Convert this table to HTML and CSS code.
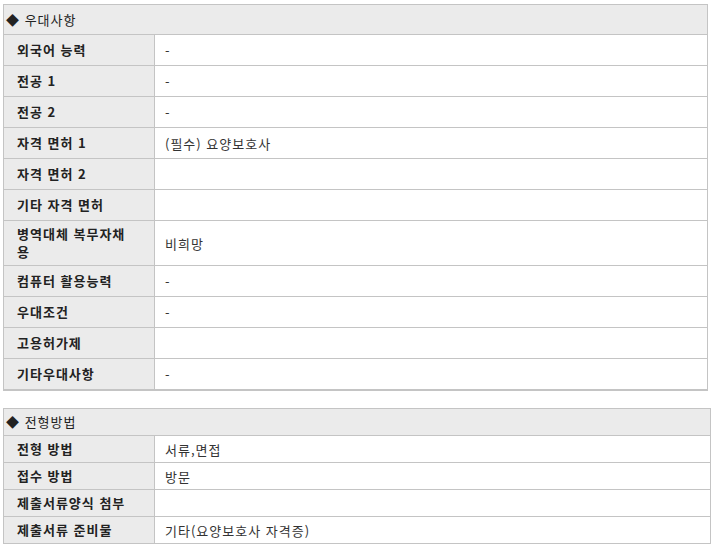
FILE: index.html
```html
<!DOCTYPE html>
<html lang="ko">
<head>
<meta charset="utf-8">
<link rel="stylesheet" href="styles.css">
</head>
<body>
<div class="page">
  <section class="box box-first">
    <div class="head">◆ 우대사항</div>
    <div class="row"><div class="label">외국어 능력</div><div class="value">-</div></div>
    <div class="row"><div class="label">전공 1</div><div class="value">-</div></div>
    <div class="row"><div class="label">전공 2</div><div class="value">-</div></div>
    <div class="row"><div class="label">자격 면허 1</div><div class="value">(필수) 요양보호사</div></div>
    <div class="row"><div class="label">자격 면허 2</div><div class="value"></div></div>
    <div class="row"><div class="label">기타 자격 면허</div><div class="value"></div></div>
    <div class="row"><div class="label wrap">병역대체 복무자채용</div><div class="value">비희망</div></div>
    <div class="row"><div class="label">컴퓨터 활용능력</div><div class="value">-</div></div>
    <div class="row"><div class="label">우대조건</div><div class="value">-</div></div>
    <div class="row"><div class="label">고용허가제</div><div class="value"></div></div>
    <div class="row last"><div class="label">기타우대사항</div><div class="value">-</div></div>
  </section>
  <section class="box box-second">
    <div class="head">◆ 전형방법</div>
    <div class="row"><div class="label">전형 방법</div><div class="value">서류,면접</div></div>
    <div class="row"><div class="label">접수 방법</div><div class="value">방문</div></div>
    <div class="row"><div class="label">제출서류양식 첨부</div><div class="value"></div></div>
    <div class="row last"><div class="label">제출서류 준비물</div><div class="value">기타(요양보호사 자격증)</div></div>
  </section>
</div>
</body>
</html>
```
FILE: styles.css
```css
html, body {
  margin: 0;
  padding: 0;
  background: #fff;
}
body {
  font-family: "Noto Sans CJK KR", "Noto Sans", sans-serif;
  font-size: 13px;
  letter-spacing: 1px;
  color: #222;
}
.page {
  padding: 4px 0 0 3px;
  display: flex;
  flex-direction: column;
  gap: 17px;
}
.box {
  border: 1px solid #c4c4c4;
  box-sizing: border-box;
}
.box-first {
  width: 705px;
  border-bottom-width: 2px;
}
.box-second {
  width: 708px;
}
.head {
  background: #ebebeb;
  border-bottom: 1px solid #c4c4c4;
  height: 29px;
  line-height: 29px;
  padding-left: 2px;
}
.box-second .head {
  height: 26px;
  line-height: 26px;
}
.row {
  display: grid;
  grid-template-columns: 151px 1fr;
  border-bottom: 1px solid #c4c4c4;
  min-height: 30px;
}
.box-second .row {
  min-height: 26px;
}
.row.last {
  border-bottom: none;
}
.label {
  background: #ebebeb;
  border-right: 1px solid #c4c4c4;
  font-weight: bold;
  padding: 0 25px 0 13px;
  display: flex;
  align-items: center;
  line-height: 16px;
  color: #222;
}
.label.wrap {
  padding-top: 4px;
  padding-bottom: 4px;
  line-height: 18px;
}
.value {
  padding-left: 10px;
  display: flex;
  align-items: center;
  color: #333;
}
```
